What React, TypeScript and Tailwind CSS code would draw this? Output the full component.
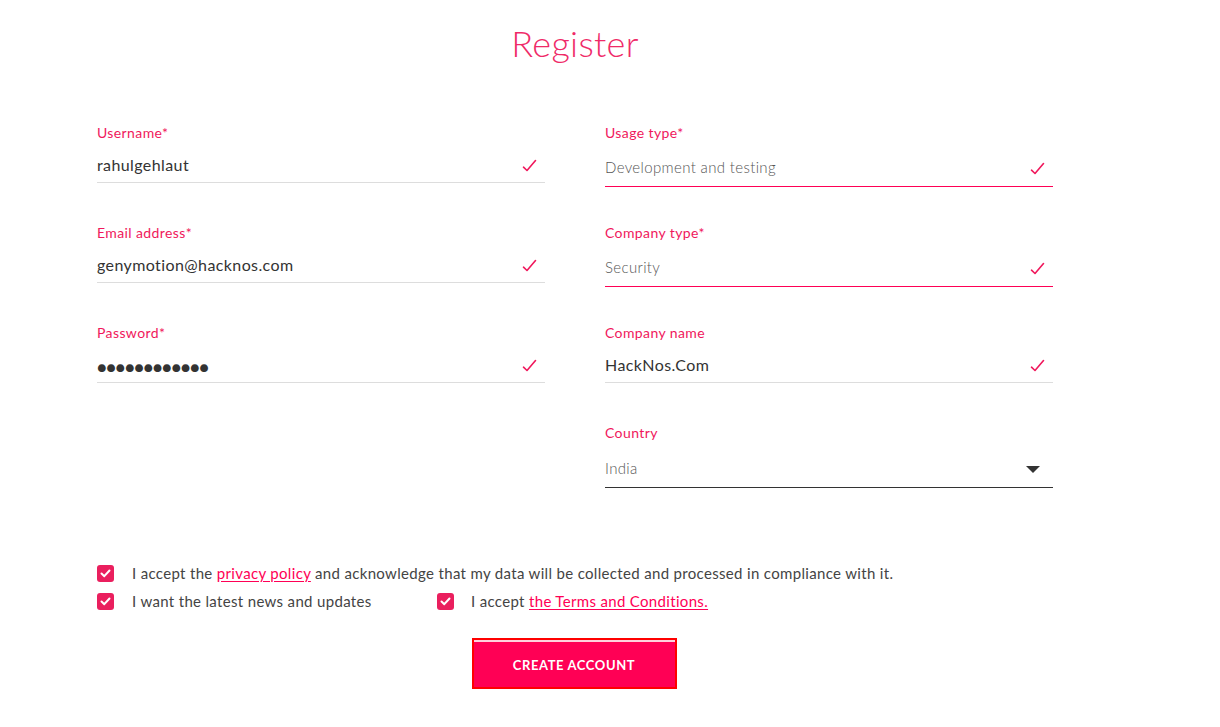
import React from "react";

type Variant = "text" | "select" | "dropdown" | "password";

interface FieldProps {
  label: string;
  value: string;
  variant?: Variant;
}

function Check() {
  return (
    <svg className="w-[15px] h-[14px] text-[#f0185c]" viewBox="0 0 15 14" fill="none" stroke="currentColor">
      <path d="M1.5 8.2 L5 11.5 L13.5 1.5" strokeWidth={1.6} strokeLinecap="round" strokeLinejoin="round" />
    </svg>
  );
}

function Field({ label, value, variant = "text" }: FieldProps) {
  const isSelect = variant === "select";
  const isDropdown = variant === "dropdown";

  const rowCls = isSelect
    ? "mt-[10px] h-[36px] border-b border-solid border-b-[#ff0055]"
    : isDropdown
    ? "mt-[10px] h-[37px] border-b border-solid border-b-[#333333]"
    : "mt-2 h-[34px] border-b border-solid border-b-[#dddddd]";

  const valueCls = isSelect || isDropdown
    ? "text-[15px] font-light text-[#555] tracking-[0.35px] -translate-y-px"
    : "text-[16px] text-[#333] tracking-[0.4px] -translate-y-px";

  return (
    <div className="h-[100px] flex flex-col">
      <label className="text-[14px] leading-4 text-[#f0185c] tracking-[0.4px] pt-px">{label}</label>
      <div className={`flex items-center justify-between pr-[8px] ${rowCls}`}>
        {variant === "password" ? (
          <span className="text-[16px] text-[#333] tracking-[-0.3px] pt-[3px]">{value}</span>
        ) : (
          <span className={valueCls}>{value}</span>
        )}
        {isDropdown ? (
          <svg className="w-[14px] h-[7px] mr-[5px] text-[#333]" viewBox="0 0 14 7" fill="currentColor">
            <path d="M0 0 H14 L7 7 Z" />
          </svg>
        ) : (
          <Check />
        )}
      </div>
    </div>
  );
}

function Box() {
  return (
    <span className="inline-flex items-center justify-center w-[17px] h-[17px] rounded-[3px] bg-[#ea1f5e] flex-shrink-0">
      <svg className="w-[11px] h-[9px]" viewBox="0 0 11 9" fill="none" stroke="#fff">
        <path d="M1.5 4.5 L4.3 7.2 L9.5 1.5" strokeWidth={2} strokeLinecap="round" strokeLinejoin="round" />
      </svg>
    </span>
  );
}

export default function App() {
  return (
    <div className="min-h-[727px] bg-white font-['Lato','Noto_Sans',sans-serif]">
      <div className="ml-[97px] w-[956px] pt-[21px]">
        {/* Title */}
        <h1 className="text-center text-[36px] leading-[44px] font-light text-[#ef2a68] tracking-[0.3px]">
          Register
        </h1>

        {/* Form columns */}
        <div className="grid grid-cols-2 gap-x-[60px] mt-[59px]">
          <div>
            <Field label="Username*" value="rahulgehlaut" />
            <Field label="Email address*" value="genymotion@hacknos.com" />
            <Field label="Password*" value="●●●●●●●●●●●●" variant="password" />
          </div>
          <div>
            <Field label="Usage type*" value="Development and testing" variant="select" />
            <Field label="Company type*" value="Security" variant="select" />
            <Field label="Company name" value="HackNos.Com" />
            <Field label="Country" value="India" variant="dropdown" />
          </div>
        </div>

        {/* Consents */}
        <div className="mt-[40px] text-[15px] text-[#444] tracking-[0.33px] space-y-[10px]">
          <div className="flex items-center h-[18px]">
            <Box />
            <span className="ml-[18px]">
              I accept the{" "}
              <a className="text-[#ff0055] underline underline-offset-2">privacy policy</a>{" "}
              and acknowledge that my data will be collected and processed in compliance with it.
            </span>
          </div>
          <div className="flex items-center h-[18px]">
            <div className="flex items-center w-[340px]">
              <Box />
              <span className="ml-[18px]">I want the latest news and updates</span>
            </div>
            <Box />
            <span className="ml-[17px]">
              I accept{" "}
              <a className="text-[#ff0055] underline underline-offset-2">the Terms and Conditions.</a>
            </span>
          </div>
        </div>

        {/* Submit */}
        <div className="flex justify-center mt-[28px] pr-[2px]">
          <button className="w-[205px] h-[51px] pt-[4px] border-2 border-[#ff0000] bg-[#ff0055] shadow-[inset_0_2px_0_#ffd0dc] text-white text-[13px] font-bold tracking-[0.6px]">
            CREATE ACCOUNT
          </button>
        </div>
      </div>
    </div>
  );
}
